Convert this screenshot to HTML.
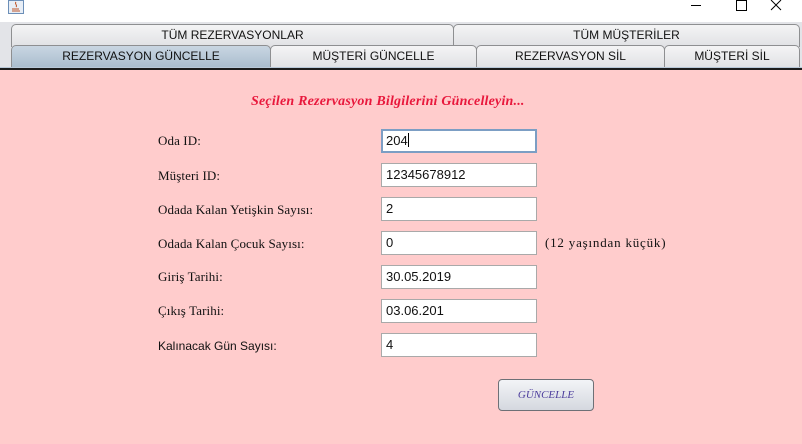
<!DOCTYPE html>
<html><head><meta charset="utf-8"><style>
*{margin:0;padding:0;box-sizing:border-box}
body{width:802px;height:444px;overflow:hidden;background:#ffcccc;position:relative;font-family:"Liberation Sans",sans-serif}
.title{position:absolute;left:0;top:0;width:802px;height:22px;background:#fff}
.tabs{position:absolute;left:0;top:22px;width:802px;height:47px;background:#e3e4e8}
.tab{position:absolute;height:23px;border:1px solid #8e8f91;border-bottom:none;border-radius:5px 5px 0 0;background:linear-gradient(#f4f4f5,#e0e1e4);font-size:12px;color:#111;text-align:center;line-height:21px}
.sel{background:linear-gradient(#c9d6e2,#a9bccd);}
.line{position:absolute;left:0;top:68px;width:802px;height:2px;background:#1c1c1c}
.line2{position:absolute;left:0;top:67px;width:802px;height:1px;background:#b8c8d8}
.lbl{position:absolute;left:158px;font-family:"Liberation Serif",serif;font-size:13px;letter-spacing:0.1px;color:#111}
.f{position:absolute;left:381px;width:156px;height:24px;background:#fff;border:1px solid #a9a9a9;font-size:13px;padding-left:4px;line-height:22px;color:#111}
</style></head><body>
<div class="title">
<svg style="position:absolute;left:8px;top:0" width="16" height="14"><rect x="0.5" y="0.5" width="15" height="13" fill="#e8eef6" stroke="#6c8fb8"/><path d="M8 2c-2 2 2 3 0 5M4 9h7M4 11h8" stroke="#c0562a" fill="none"/></svg>
<svg style="position:absolute;left:690px;top:0" width="100" height="14"><path d="M1 5.5h10" stroke="#000"/><rect x="46.5" y="0.5" width="10" height="10" fill="none" stroke="#000"/><path d="M81 0l10 10M91 0l-10 10" stroke="#000"/></svg>
</div>
<div class="tabs">
<div class="tab" style="left:11px;top:2px;width:443px">TÜM REZERVASYONLAR</div>
<div class="tab" style="left:453px;top:2px;width:347px">TÜM MÜŞTERİLER</div>
<div class="tab sel" style="left:11px;top:23px;width:260px">REZERVASYON GÜNCELLE</div>
<div class="tab" style="left:270px;top:23px;width:207px">MÜŞTERİ GÜNCELLE</div>
<div class="tab" style="left:476px;top:23px;width:189px">REZERVASYON SİL</div>
<div class="tab" style="left:664px;top:23px;width:136px">MÜŞTERİ SİL</div>
</div>
<div class="line2"></div><div class="line"></div>
<div style="position:absolute;left:251px;top:94px;font-family:'Liberation Serif',serif;font-weight:bold;font-style:italic;font-size:14px;letter-spacing:0.2px;color:#e8183c">Seçilen Rezervasyon Bilgilerini Güncelleyin...</div>
<div class="lbl" style="top:133px">Oda ID:</div>
<div class="f" style="top:129px;border:2px solid #7c9ec4;line-height:20px;padding-left:3px">204<span style="display:inline-block;width:1px;height:14px;background:#000;vertical-align:-2px"></span></div>
<div class="lbl" style="top:168px">Müşteri ID:</div>
<div class="f" style="top:163px">12345678912</div>
<div class="lbl" style="top:202px">Odada Kalan Yetişkin Sayısı:</div>
<div class="f" style="top:197px">2</div>
<div class="lbl" style="top:236px">Odada Kalan Çocuk Sayısı:</div>
<div class="f" style="top:231px">0</div>
<div class="lbl" style="left:545px;top:235px;letter-spacing:0.8px">(12 yaşından küçük)</div>
<div class="lbl" style="top:269px">Giriş Tarihi:</div>
<div class="f" style="top:265px">30.05.2019</div>
<div class="lbl" style="top:303px">Çıkış Tarihi:</div>
<div class="f" style="top:299px">03.06.201</div>
<div class="lbl" style="top:339px;font-family:'Liberation Sans',sans-serif;font-size:12px;letter-spacing:0">Kalınacak Gün Sayısı:</div>
<div class="f" style="top:333px">4</div>
<div style="position:absolute;left:498px;top:379px;width:96px;height:32px;border:1px solid #6e7076;border-radius:4px;background:linear-gradient(#f3f4f7,#d5d8df);text-align:center;line-height:30px;font-family:'Liberation Serif',serif;font-style:italic;font-size:11px;color:#4b3c9c">GÜNCELLE</div>
</body></html>
